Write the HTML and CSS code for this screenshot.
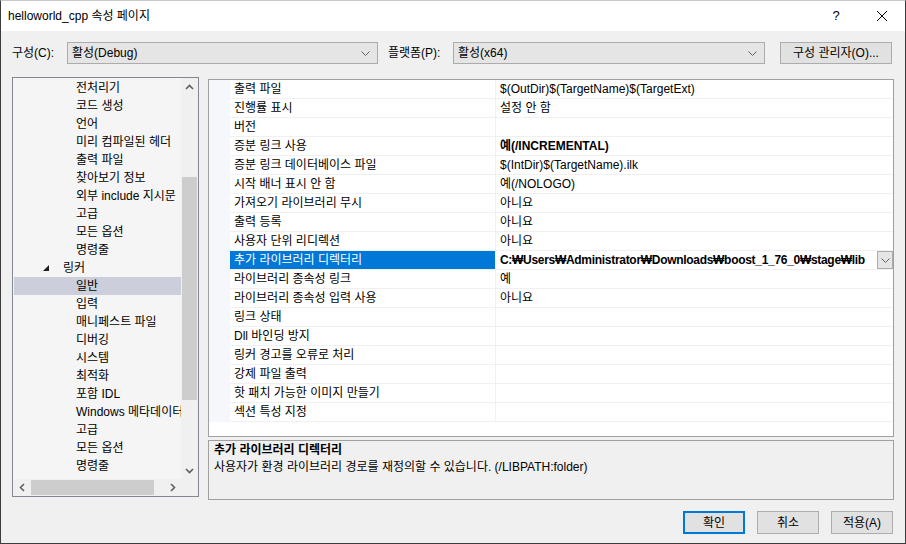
FILE: index.html
```html
<!DOCTYPE html>
<html lang="ko">
  <head>
    <meta charset="utf-8">
    <link rel="stylesheet" href="styles.css">
  </head>
  <body>
    <div class="window">
      <div class="titlebar">
        <div class="title">helloworld_cpp 속성 페이지</div>
        <div class="cap-btn">?</div>
        <div class="cap-btn">
          <svg width="12" height="12" viewBox="0 0 12 12"><path d="M1 1L11 11M11 1L1 11" stroke="#000" stroke-width="1" fill="none"/></svg>
        </div>
      </div>

      <div class="toolbar">
        <div class="lbl lbl-config">구성(C):</div>
        <div class="combo combo-config">
          <span class="combo-text">활성(Debug)</span>
          <svg class="chev" width="9" height="5" viewBox="0 0 9 5"><path d="M0.5 0.5L4.5 4.5L8.5 0.5" stroke="#606060" fill="none"/></svg>
        </div>
        <div class="lbl lbl-platform">플랫폼(P):</div>
        <div class="combo combo-platform">
          <span class="combo-text">활성(x64)</span>
          <svg class="chev" width="9" height="5" viewBox="0 0 9 5"><path d="M0.5 0.5L4.5 4.5L8.5 0.5" stroke="#606060" fill="none"/></svg>
        </div>
        <div class="btn btn-manager">구성 관리자(O)...</div>
      </div>

      <div class="main">
        <div class="tree">
          <div class="tree-top">
            <div class="tree-list">
              <div class="node sub">전처리기</div>
              <div class="node sub">코드 생성</div>
              <div class="node sub">언어</div>
              <div class="node sub">미리 컴파일된 헤더</div>
              <div class="node sub">출력 파일</div>
              <div class="node sub">찾아보기 정보</div>
              <div class="node sub">외부 include 지시문</div>
              <div class="node sub">고급</div>
              <div class="node sub">모든 옵션</div>
              <div class="node sub">명령줄</div>
              <div class="node group">
                <svg class="expander" width="7" height="7" viewBox="0 0 7 7"><polygon points="6,0 6,6 0,6" fill="#1e1e1e"/></svg>
                링커
              </div>
              <div class="node sub selected">일반</div>
              <div class="node sub">입력</div>
              <div class="node sub">매니페스트 파일</div>
              <div class="node sub">디버깅</div>
              <div class="node sub">시스템</div>
              <div class="node sub">최적화</div>
              <div class="node sub">포함 IDL</div>
              <div class="node sub">Windows 메타데이터</div>
              <div class="node sub">고급</div>
              <div class="node sub">모든 옵션</div>
              <div class="node sub">명령줄</div>
            </div>
            <div class="vbar">
              <div class="arrow">
                <svg width="9" height="6" viewBox="0 0 9 6"><path d="M1 5L4.5 1.5L8 5" stroke="#606060" stroke-width="1.6" fill="none"/></svg>
              </div>
              <div class="vtrack"><div class="vthumb"></div></div>
              <div class="arrow">
                <svg width="9" height="6" viewBox="0 0 9 6"><path d="M1 1L4.5 4.5L8 1" stroke="#606060" stroke-width="1.6" fill="none"/></svg>
              </div>
            </div>
          </div>
          <div class="hbar">
            <div class="arrow">
              <svg width="6" height="9" viewBox="0 0 6 9"><path d="M5 1L1.5 4.5L5 8" stroke="#606060" stroke-width="1.6" fill="none"/></svg>
            </div>
            <div class="htrack"><div class="hthumb"></div></div>
            <div class="arrow">
              <svg width="6" height="9" viewBox="0 0 6 9"><path d="M1 1L4.5 4.5L1 8" stroke="#606060" stroke-width="1.6" fill="none"/></svg>
            </div>
            <div class="corner"></div>
          </div>
        </div>

        <div class="right">
          <div class="grid">
            <div class="prop"><div class="gutter"></div><div class="name">출력 파일</div><div class="value">$(OutDir)$(TargetName)$(TargetExt)</div></div>
            <div class="prop"><div class="gutter"></div><div class="name">진행률 표시</div><div class="value">설정 안 함</div></div>
            <div class="prop"><div class="gutter"></div><div class="name">버전</div><div class="value"></div></div>
            <div class="prop"><div class="gutter"></div><div class="name">증분 링크 사용</div><div class="value bold">예(/INCREMENTAL)</div></div>
            <div class="prop"><div class="gutter"></div><div class="name">증분 링크 데이터베이스 파일</div><div class="value">$(IntDir)$(TargetName).ilk</div></div>
            <div class="prop"><div class="gutter"></div><div class="name">시작 배너 표시 안 함</div><div class="value">예(/NOLOGO)</div></div>
            <div class="prop"><div class="gutter"></div><div class="name">가져오기 라이브러리 무시</div><div class="value">아니요</div></div>
            <div class="prop"><div class="gutter"></div><div class="name">출력 등록</div><div class="value">아니요</div></div>
            <div class="prop"><div class="gutter"></div><div class="name">사용자 단위 리디렉션</div><div class="value">아니요</div></div>
            <div class="prop active">
              <div class="gutter"></div>
              <div class="name">추가 라이브러리 디렉터리</div>
              <div class="value bold">
                <span class="value-text">C:₩Users₩Administrator₩Downloads₩boost_1_76_0₩stage₩lib</span>
                <div class="drop">
                  <svg width="9" height="5" viewBox="0 0 9 5"><path d="M0.5 0.5L4.5 4.5L8.5 0.5" stroke="#606060" fill="none"/></svg>
                </div>
              </div>
            </div>
            <div class="prop"><div class="gutter"></div><div class="name">라이브러리 종속성 링크</div><div class="value">예</div></div>
            <div class="prop"><div class="gutter"></div><div class="name">라이브러리 종속성 입력 사용</div><div class="value">아니요</div></div>
            <div class="prop"><div class="gutter"></div><div class="name">링크 상태</div><div class="value"></div></div>
            <div class="prop"><div class="gutter"></div><div class="name">Dll 바인딩 방지</div><div class="value"></div></div>
            <div class="prop"><div class="gutter"></div><div class="name">링커 경고를 오류로 처리</div><div class="value"></div></div>
            <div class="prop"><div class="gutter"></div><div class="name">강제 파일 출력</div><div class="value"></div></div>
            <div class="prop"><div class="gutter"></div><div class="name">핫 패치 가능한 이미지 만들기</div><div class="value"></div></div>
            <div class="prop"><div class="gutter"></div><div class="name">섹션 특성 지정</div><div class="value"></div></div>
          </div>
          <div class="desc">
            <div class="desc-title">추가 라이브러리 디렉터리</div>
            <div>사용자가 환경 라이브러리 경로를 재정의할 수 있습니다. (/LIBPATH:folder)</div>
          </div>
        </div>
      </div>

      <div class="buttons">
        <div class="btn btn-ok">확인</div>
        <div class="btn">취소</div>
        <div class="btn">적용(A)</div>
      </div>
    </div>
  </body>
</html>
```

FILE: styles.css
```css
* {
  box-sizing: border-box;
}

body {
  margin: 0;
  font-family: "Liberation Sans", "Noto Sans CJK KR", sans-serif;
  font-size: 12px;
  line-height: 18px;
  color: #000;
  background: #f0f0f0;
}

.window {
  width: 906px;
  height: 544px;
  border: 1px solid #3c3c3c;
  border-top-color: #c8c8c8;
  background: #f0f0f0;
  display: flex;
  flex-direction: column;
}

/* title bar */
.titlebar {
  height: 30px;
  background: #fff;
  display: flex;
  align-items: center;
  padding-left: 7px;
}
.title {
  flex: 1;
  font-size: 12px;
}
.cap-btn {
  width: 46px;
  height: 30px;
  display: flex;
  align-items: center;
  justify-content: center;
  font-size: 13px;
}

/* configuration bar */
.toolbar {
  display: flex;
  align-items: center;
  height: 22px;
  margin: 11px 0 0 11px;
}
.lbl-config {
  width: 55px;
}
.lbl-platform {
  width: 65px;
  margin-left: 10px;
}
.combo {
  height: 22px;
  background: #e5e5e5;
  border: 1px solid #acacac;
  display: flex;
  align-items: center;
  padding: 0 7px 0 4px;
}
.combo-text {
  flex: 1;
}
.combo-config {
  width: 311px;
}
.combo-platform {
  width: 312px;
}
.btn {
  height: 23px;
  width: 62px;
  background: #e1e1e1;
  border: 1px solid #adadad;
  display: flex;
  align-items: center;
  justify-content: center;
}
.btn-manager {
  width: 112px;
  height: 22px;
  margin-left: 15px;
}

/* main area */
.main {
  display: flex;
  margin: 13px 0 0 11px;
}

.tree {
  width: 187px;
  height: 420px;
  border: 1px solid #828790;
  background: #f5f5f5;
  display: flex;
  flex-direction: column;
}
.tree-top {
  flex: 1;
  display: flex;
  min-height: 0;
}
.tree-list {
  flex: 1;
  overflow: hidden;
  padding: 1px 0 0 1px;
}
.node {
  height: 18px;
  white-space: nowrap;
  overflow: hidden;
  display: flex;
  align-items: center;
}
.node.sub {
  padding-left: 62px;
}
.node.group {
  padding-left: 29px;
}
.expander {
  margin-right: 13px;
}
.node.selected {
  background: #cccedb;
}

.vbar {
  width: 17px;
  background: #f0f0f0;
  display: flex;
  flex-direction: column;
}
.arrow {
  width: 17px;
  height: 17px;
  display: flex;
  align-items: center;
  justify-content: center;
}
.vtrack {
  flex: 1;
  padding: 82px 1px 0 1px;
}
.vthumb {
  height: 223px;
  background: #cdcdcd;
}
.hbar {
  height: 17px;
  display: flex;
  background: #f0f0f0;
}
.htrack {
  flex: 1;
  padding: 1px 10px 1px 1px;
}
.hthumb {
  height: 100%;
  background: #cdcdcd;
}
.corner {
  width: 17px;
}

/* property grid */
.right {
  width: 686px;
  margin: 2px 0 0 9px;
  display: flex;
  flex-direction: column;
}
.grid {
  height: 358px;
  background: #fff;
  border: 1px solid #a0a0a0;
}
.prop {
  display: flex;
  height: 19px;
}
.gutter {
  width: 21px;
  background: #f5f7fc;
}
.name {
  width: 265px;
  padding: 1px 0 0 4px;
  border-bottom: 1px solid #f0f0f0;
  white-space: nowrap;
  line-height: 17px;
}
.value {
  flex: 1;
  min-width: 0;
  padding: 1px 0 0 4px;
  border-left: 1px solid #f0f0f0;
  border-bottom: 1px solid #f0f0f0;
  white-space: nowrap;
  line-height: 17px;
  display: flex;
}
.bold {
  font-weight: bold;
}
.prop.active .name {
  background: #0078d7;
  color: #fff;
}
.value-text {
  flex: 1;
  letter-spacing: -0.3px;
}
.drop {
  width: 16px;
  height: 18px;
  margin-top: -1px;
  background: #e5e5e5;
  border: 1px solid #acacac;
  display: flex;
  align-items: center;
  justify-content: center;
}

.desc {
  height: 60px;
  margin-top: 3px;
  border: 1px solid #a0a0a0;
  padding: 1px 5px;
  line-height: 17px;
}
.desc-title {
  font-weight: bold;
}

/* dialog buttons */
.buttons {
  display: flex;
  justify-content: flex-end;
  gap: 12px;
  margin-top: 11px;
  padding-right: 12px;
}
.btn-ok {
  border: 2px solid #0078d7;
}
```
